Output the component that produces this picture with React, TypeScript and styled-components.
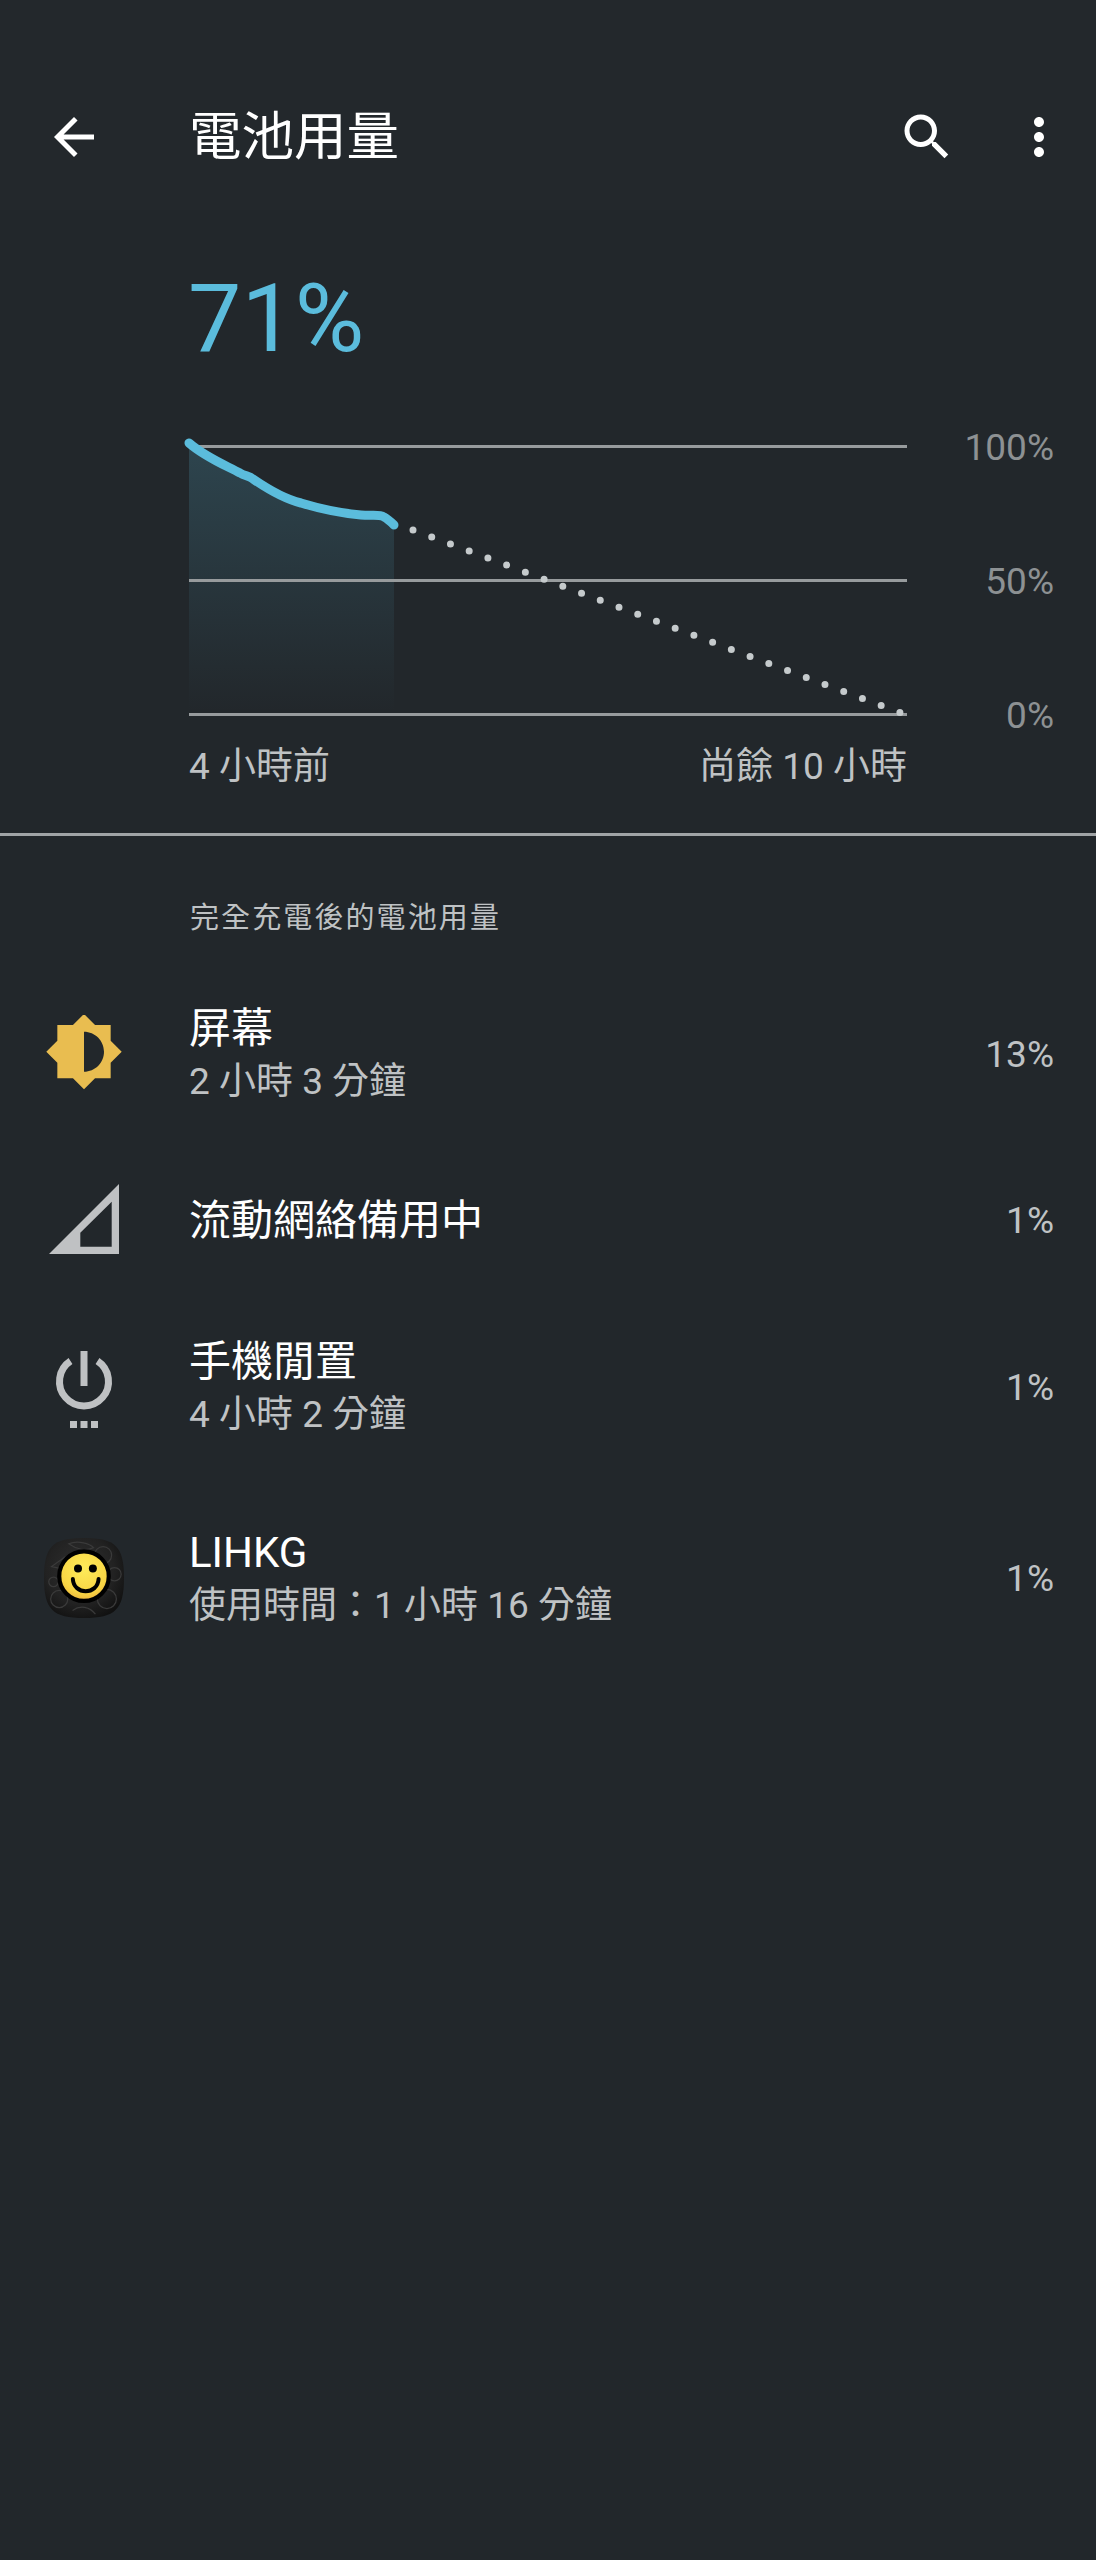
import React from "react";
import styled, { createGlobalStyle } from "styled-components";

const GlobalStyle = createGlobalStyle`
  html, body {
    margin: 0;
    padding: 0;
    background: #22272b;
  }
`;

const CURVE =
  "M0 3 C16 17 36 25 51 33 C56 36 60 36 64 39 C80 50 95 59 112 63 C132 69 150 73 172 75 C184 76 190 74 195 77 C199 79 202 82 205 85";
const AREA =
  "M0 4 C16 17 36 25 51 33 C56 36 60 36 64 39 C80 50 95 59 112 63 C132 69 150 73 172 75 C184 76 190 74 195 77 C199 79 202 82 205 85 L205 272 L0 272 Z";
const TILE =
  "M42 0 C75 0 84 9 84 42 C84 75 75 84 42 84 C9 84 0 75 0 42 C0 9 9 0 42 0 Z";

const rows = [
  { key: "screen", icon: <BrightnessIcon />, title: "屏幕", sub: "2 小時 3 分鐘", pct: "13%", height: 166 },
  { key: "cell", icon: <SignalIcon />, title: "流動網絡備用中", pct: "1%", height: 166 },
  { key: "idle", icon: <IdleIcon />, title: "手機閒置", sub: "4 小時 2 分鐘", pct: "1%", height: 167 },
  { key: "lihkg", icon: <LihkgIcon />, title: "LIHKG", sub: "使用時間：1 小時 16 分鐘", pct: "1%", height: 216 },
];

function BrightnessIcon() {
  return (
    <svg width="80" height="80" viewBox="0 1 24 24" fill="#e9bd50">
      <path d="M20 15.31L23.31 12 20 8.69V4h-4.69L12 .69 8.69 4H4v4.69L.69 12 4 15.31V20h4.69L12 23.31 15.31 20H20v-4.69zM12 18V6c3.31 0 6 2.69 6 6s-2.69 6-6 6z" />
    </svg>
  );
}

function SignalIcon() {
  return (
    <svg width="80" height="80" viewBox="0 0 80 80" fill="#bfc1c3">
      <path
        fillRule="evenodd"
        d="M5 73 L75 3 L75 73 Z M67.7 20.7 L36.3 51.7 L36.3 65.7 L67.7 65.7 Z"
      />
    </svg>
  );
}

function IdleIcon() {
  return (
    <svg width="80" height="90" viewBox="0 0 80 90" fill="none">
      <path
        d="M26.5 18 A24.5 24.5 0 1 0 53.5 18"
        stroke="#bfc1c3"
        strokeWidth="7"
      />
      <rect x="36.5" y="8" width="7" height="35" fill="#bfc1c3" />
      <rect x="26" y="78" width="7" height="7" fill="#bfc1c3" />
      <rect x="36.5" y="78" width="7" height="7" fill="#bfc1c3" />
      <rect x="47" y="78" width="7" height="7" fill="#bfc1c3" />
    </svg>
  );
}

function LihkgIcon() {
  return (
    <svg width="84" height="84" viewBox="0 1 84 84">
      <defs>
        <radialGradient id="tile" cx="45%" cy="40%" r="65%">
          <stop offset="0%" stopColor="#303030" />
          <stop offset="65%" stopColor="#222" />
          <stop offset="100%" stopColor="#111" />
        </radialGradient>
        <radialGradient id="face" cx="50%" cy="35%" r="70%">
          <stop offset="0%" stopColor="#fdeb5a" />
          <stop offset="70%" stopColor="#f8d544" />
          <stop offset="100%" stopColor="#e9ab3a" />
        </radialGradient>
        <clipPath id="tileClip">
          <path d={TILE} />
        </clipPath>
      </defs>
      <path d={TILE} fill="url(#tile)" />
      <g
        clipPath="url(#tileClip)"
        fill="none"
        stroke="#3a3a3a"
        strokeWidth="1.3"
      >
        <circle cx="62" cy="18" r="9" />
        <circle cx="74" cy="38" r="7" />
        <circle cx="16" cy="64" r="9" />
        <circle cx="66" cy="64" r="10" />
        <path d="M8 30 L22 20 L27 34 Z" />
        <path d="M26 6 C36 2 48 6 52 10 C44 14 34 12 26 6 Z" />
        <path d="M30 76 C38 70 48 72 54 80" />
        <circle cx="10" cy="46" r="5" />
      </g>
      <circle cx="42" cy="40" r="26" fill="url(#face)" stroke="#000" strokeWidth="4.4" />
      <circle cx="35.7" cy="32" r="4.2" fill="#000" />
      <circle cx="51.3" cy="32" r="4.2" fill="#000" />
      <path
        d="M30.3 43 C31 60 56.5 60 57.3 43"
        fill="none"
        stroke="#000"
        strokeWidth="4.2"
        strokeLinecap="round"
      />
    </svg>
  );
}

export default function App() {
  return (
    <>
      <GlobalStyle />
      <Page>
        <Toolbar>
          <BackButton>
            <svg width="60" height="60" viewBox="0 0 24 24" fill="#fff">
              <path d="M20 11H7.83l5.59-5.59L12 4l-8 8 8 8 1.41-1.41L7.83 13H20v-2z" />
            </svg>
          </BackButton>
          <Title>電池用量</Title>
          <Actions>
            <svg width="60" height="60" viewBox="0 0 24 24" fill="#fff">
              <path d="M15.5 14h-.79l-.28-.27C15.41 12.59 16 11.11 16 9.5 16 5.91 13.09 3 9.5 3S3 5.91 3 9.5 5.91 16 9.5 16c1.61 0 3.09-.59 4.23-1.57l.27.28v.79l5 4.99L20.49 19l-4.99-5zm-6 0C7.01 14 5 11.99 5 9.5S7.01 5 9.5 5 14 7.01 14 9.5 11.99 14 9.5 14z" />
            </svg>
            <svg width="60" height="60" viewBox="0 0 24 24" fill="#fff">
              <path d="M12 8c1.1 0 2-.9 2-2s-.9-2-2-2-2 .9-2 2 .9 2 2 2zm0 2c-1.1 0-2 .9-2 2s.9 2 2 2 2-.9 2-2-.9-2-2-2zm0 6c-1.1 0-2 .9-2 2s.9 2 2 2 2-.9 2-2-.9-2-2-2z" />
            </svg>
          </Actions>
        </Toolbar>

        <Level>71%</Level>

        <ChartRow>
          <svg width="718" height="280" viewBox="0 0 718 280" overflow="visible">
            <defs>
              <linearGradient id="area" x1="0" y1="0" x2="0" y2="1">
                <stop offset="0%" stopColor="#5bbcdc" stopOpacity="0.2" />
                <stop offset="100%" stopColor="#5bbcdc" stopOpacity="0" />
              </linearGradient>
            </defs>
            <path d={AREA} fill="url(#area)" />
            <g stroke="#979b9d" strokeWidth="3">
              <line x1="0" y1="6.5" x2="718" y2="6.5" />
              <line x1="0" y1="140.5" x2="718" y2="140.5" />
              <line x1="0" y1="274.5" x2="718" y2="274.5" />
            </g>
            <line
              x1="224"
              y1="90"
              x2="712"
              y2="273"
              stroke="#c5cacc"
              strokeWidth="7"
              strokeLinecap="round"
              strokeDasharray="0 20"
            />
            <path
              d={CURVE}
              fill="none"
              stroke="#5bbcdc"
              strokeWidth="9"
              strokeLinecap="round"
              strokeLinejoin="round"
            />
          </svg>
          <ScaleLabels>
            <span>100%</span>
            <span>50%</span>
            <span>0%</span>
          </ScaleLabels>
        </ChartRow>

        <TimeAxis>
          <span>4 小時前</span>
          <span>尚餘 10 小時</span>
        </TimeAxis>

        <Divider />

        <SectionHeading>完全充電後的電池用量</SectionHeading>

        <List>
          {rows.map((row) => (
            <Row key={row.key} $height={row.height}>
              <IconSlot>{row.icon}</IconSlot>
              <RowText>
                <RowTitle>{row.title}</RowTitle>
                {row.sub && <RowSub>{row.sub}</RowSub>}
              </RowText>
              <Percent>{row.pct}</Percent>
            </Row>
          ))}
        </List>
      </Page>
    </>
  );
}

const Page = styled.div`
  width: 1096px;
  height: 2560px;
  overflow: hidden;
  background: #22272b;
  font-family: Roboto, "Noto Sans CJK TC", sans-serif;
`;

const Toolbar = styled.header`
  display: flex;
  align-items: center;
  box-sizing: border-box;
  height: 210px;
  padding: 64px 27px 0 44px;
  background: #23282c;
`;

const BackButton = styled.div`
  display: flex;
  width: 145px;
  flex: none;
`;

const Title = styled.div`
  flex: 1;
  font-size: 52.5px;
  line-height: 72px;
  color: #fff;
`;

const Actions = styled.div`
  display: flex;
  gap: 52px;
`;

const Level = styled.div`
  box-sizing: border-box;
  height: 110px;
  margin-top: 54px;
  padding-left: 188px;
  font-size: 95px;
  font-weight: 400;
  line-height: 110px;
  color: #5bbcdc;
`;

const ChartRow = styled.div`
  display: flex;
  margin-top: 66px;
  padding-left: 189px;
`;

const ScaleLabels = styled.div`
  display: flex;
  flex: 1;
  flex-direction: column;
  justify-content: space-between;
  align-items: flex-end;
  height: 308px;
  margin-top: -12px;
  padding-right: 42px;
  font-size: 37px;
  line-height: 40px;
  color: #8d9193;
`;

const TimeAxis = styled.div`
  display: flex;
  justify-content: space-between;
  box-sizing: border-box;
  width: 718px;
  margin: 6px 0 0 189px;
  font-size: 37px;
  line-height: 50px;
  color: #bfc2c4;
`;

const Divider = styled.div`
  height: 3px;
  margin-top: 41px;
  background: #a0a4a6;
`;

const SectionHeading = styled.div`
  margin-top: 62px;
  padding-left: 190px;
  font-size: 29px;
  letter-spacing: 2.1px;
  line-height: 40px;
  color: #bfc2c4;
`;

const List = styled.div`
  display: flex;
  flex-direction: column;
  margin-top: 34px;
`;

const Row = styled.div<{ $height: number }>`
  display: flex;
  align-items: center;
  box-sizing: border-box;
  height: ${(p) => p.$height}px;
  padding: 0 42px 0 44px;
`;

const IconSlot = styled.div`
  display: flex;
  justify-content: center;
  width: 80px;
  margin-right: 65px;
  flex: none;
`;

const RowText = styled.div`
  display: flex;
  flex: 1;
  flex-direction: column;
`;

const RowTitle = styled.div`
  font-size: 42px;
  line-height: 54px;
  color: #fff;
`;

const RowSub = styled.div`
  font-size: 37px;
  line-height: 52px;
  color: #bfc2c4;
`;

const Percent = styled.div`
  font-size: 37px;
  line-height: 50px;
  color: #bfc2c4;
`;
